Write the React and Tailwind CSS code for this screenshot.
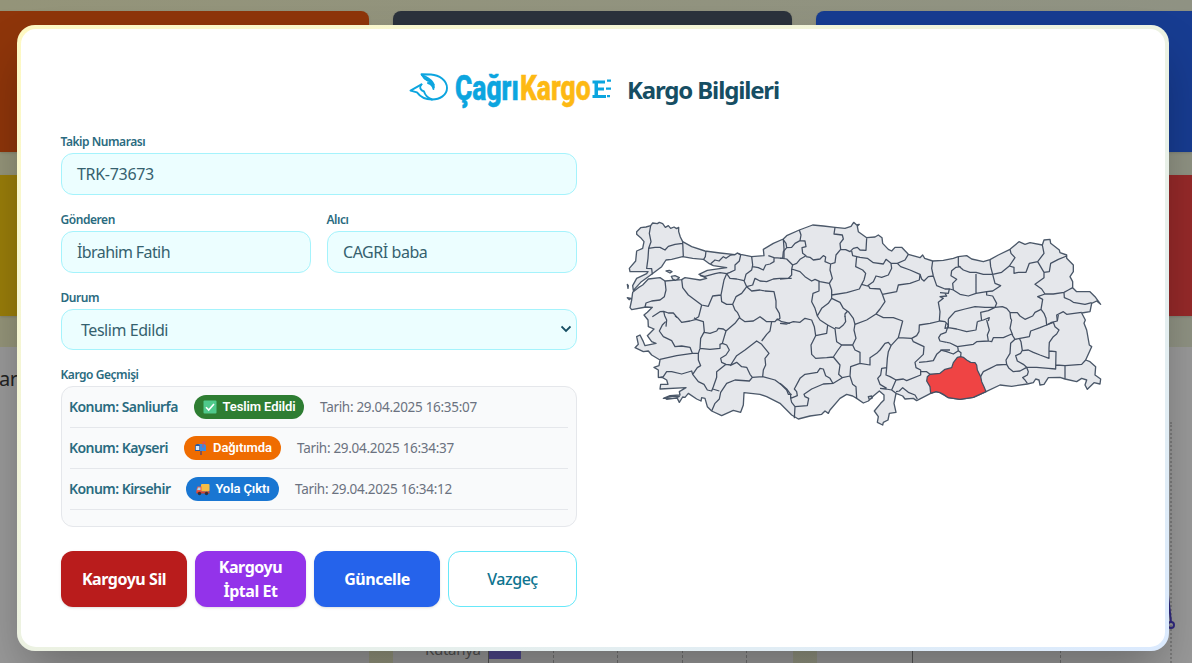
import React from "react";

const OUTLINE =
  "M50 58L50 50 62 38 78 36 92 32 98 24 112 26 118 22 128 26 136 37 145 32 152 40 162 36 170 41 176 37 176 50 181 66 188 80 215 95 255 108 300 114 345 119 352 114 362 118 395 125 432 122 430 103 460 85 490 72 500 62 538 45 578 30 610 33 645 37 675 40 693 34 701 22 710 30 718 28 712 34 715 50 740 68 765 66 775 60 786 68 788 85 805 103 815 108 825 97 845 97 865 118 900 128 908 120 914 130 938 138 970 136 1000 130 1015 125 1040 122 1055 132 1090 140 1110 134 1135 120 1170 103 1197 80 1215 88 1230 83 1267 90 1272 75 1290 73 1292 85 1318 105 1320 113 1340 120 1340 130 1360 150 1360 170 1350 185 1358 200 1358 218 1370 230 1410 230 1425 245 1442 268 1430 258 1415 265 1410 290 1385 294 1396 315 1392 325 1400 345 1408 390 1415 395 1397 435 1410 440 1427 455 1425 480 1442 492 1440 507 1422 503 1402 523 1395 510 1400 495 1385 490 1370 500 1335 492 1320 487 1285 488 1272 508 1260 510 1257 495 1247 492 1240 503 1222 507 1175 514 1140 510 1098 530 1060 547 1020 553 985 548 960 533 948 530 932 535 890 557 880 550 855 552 848 543 828 535 822 565 828 592 808 595 804 615 790 622 788 630 772 622 775 605 763 588 782 565 792 555 792 540 778 528 760 543 745 558 730 564 710 550 698 543 680 538 660 550 630 585 625 595 615 588 605 598 570 603 535 612 515 600 480 565 440 545 420 538 372 533 370 570 362 592 340 586 305 602 275 588 262 575 255 550 245 548 243 558 230 552 205 535 195 547 188 546 178 562 172 550 130 550 150 542 180 540 178 530 198 518 120 522 122 508 144 508 140 495 128 488 115 487 115 465 102 457 117 452 120 435 95 420 85 408 70 410 45 398 55 388 50 365 60 360 70 380 75 392 108 385 95 380 82 362 102 342 85 335 84 315 72 300 82 292 97 277 78 276 35 284 30 278 35 255 38 232 55 218 68 210 85 192 120 188 135 198 185 194 195 188 240 195 260 190 237 178 262 166 320 158 280 152 268 146 250 133 218 130 188 125 155 133 138 135 125 155 95 178 62 202 40 226 38 212 50 190 80 176 84 170 30 170 28 160 47 138 50 108 68 100 72 80 62 68Z";

const ISLANDS =
  "M138 168L148 166 156 170 150 174ZM154 184L165 182 178 188 168 196 158 192ZM22 208L25 212 24 220ZM22 248L33 250 28 254ZM134 548L160 543 178 544 168 549 140 553ZM745 545L755 543 757 549 748 554Z";

const BORDERS = [
  {
    shift: "translate(0 0)",
    d: "M92 32L88 55 93 80 86 100 84 130 80 160 95 161 97 178M86 100L105 97 120 97 135 105 145 94 165 88 188 85M188 80L190 125M258 108L256 125 250 135M272 146L285 135 297 138 310 125 318 130 332 120 345 119M352 114L362 120 358 138 345 150 345 165 330 172 320 176 300 173 285 176 255 184 240 182M320 176L330 190 350 192 372 197 380 215M320 176L312 195 308 215 303 240 278 243 270 262 265 274 245 270 225 255 205 240 188 218 185 193M303 240L305 260 320 268 338 268M245 270L240 290 236 305 225 312M135 198L138 225 133 245 120 255 95 258 78 264 75 276M338 268L348 245 365 235 375 222 380 215M338 268L345 285 352 292 360 308M472 316L480 310 478 295 468 278 468 258 462 230 435 228 420 225 395 228 380 215M395 125L398 150 395 165 378 178 373 197M398 155L415 158 430 165 437 150 450 147 462 140 462 128 445 122M490 72L492 100 492 130M462 128L490 130M380 215L398 210 405 190 420 198 440 200 460 192 480 190 515 190M97 305L120 290 131 289 134 302 140 315 138 335M131 289L145 294 160 294 172 308",
  },
  {
    shift: "translate(0 300)",
    d: "M137 20L127 30 118 48 130 65 155 77 165 95 185 93 210 97 217 115M165 3L175 10 185 22 210 18 228 13 250 20 253 50 242 70 240 100M253 52L270 55 290 48 295 40 310 42 318 48 312 68 307 85 300 88 300 100 270 103 240 100 235 115 217 115 170 122 120 133M318 48L345 25 358 8 375 20 400 18 420 5 440 20 465 20 472 12 485 20 510 25M455 20L450 48 440 58 425 78M307 85L320 90 328 105 318 120 302 130 305 142 318 148 332 150 350 122 375 105 410 78 425 88 447 115 435 130 437 150 430 165 428 185M235 115L235 135 242 152 232 158 218 178 215 168 185 177 155 170 140 170 130 185 115 188M218 178L235 200 252 208 262 225 275 228 280 215 290 187 290 170 318 148M330 152L350 142 365 155 380 157 390 178 397 187 388 198 345 195 320 205 302 232 298 252 285 265 275 288M278 222L298 228M397 187L428 185 465 195 485 210 500 225 505 238 515 238M228 13L222 8",
  },
  {
    shift: "translate(480 0)",
    d: "M8 72L18 85 20 98 35 97 45 85 60 77 63 60 58 45M20 98L10 110 8 130 0 130M8 130L20 132 38 150 35 162M60 77L75 78 78 95 66 98 68 115 78 122 60 133 50 145 38 150M78 125L90 127 100 135 120 132 130 122 137 126 135 140 152 147 165 143 168 120 182 103 180 85 190 72 187 60 162 57 165 37M182 103L197 104 210 110 220 100 232 97 240 105 258 106 260 70M215 108L218 122 240 127 262 130 280 143 310 147 318 133 333 145 335 160 325 180 305 187 288 183 280 200 262 213 245 208M230 125L227 155 248 165 257 175 252 195 245 208 238 222 200 233 155 240M35 162L60 170 75 185 95 198 105 193 120 200 148 205 157 190 150 165 152 147M35 162L35 180 25 190 0 192M117 200L117 228 99 235 95 260 105 280 112 303M148 205L155 225 155 250 145 265 125 280 112 303M333 145L352 145 375 135 385 118M352 145L362 155 390 165 420 178 418 195 390 205 355 210 350 230 307 238M420 178L425 192 432 198 445 185 460 183M458 138L455 160 460 183 470 212 495 222 510 222M265 212L270 220 300 222 307 238 315 260 300 282 288 297M155 250L180 262 190 280 205 290 220 310 225 328M203 288L195 297 195 305M288 297L260 315 225 328M495 235L500 243 480 245 490 250 475 262 480 290 478 318",
  },
  {
    shift: "translate(480 300)",
    d: "M0 25L20 27 40 20 60 22 75 10 95 15 103 35 107 62 140 55 143 30 120 15 112 3M143 30L165 42M107 62L93 90 95 118 107 130 140 128 160 126 172 108 185 90 170 80 167 58 165 40M195 3L197 20 190 30 178 40 165 38M185 90L218 90 228 70 222 45 225 27M218 90L225 105 240 112 240 145 212 155 210 183 218 208 228 215 230 250M160 126L180 150 176 178 187 188 210 183M240 145L270 150 270 128 290 115 300 105 315 85 325 82 333 92 325 110 322 130 320 158 305 160 302 180 293 190 300 208 320 220M288 -3L310 8 340 8 368 18 355 68 333 92M355 68L395 70 400 80 432 95 430 118 405 142 408 158 422 165 422 180 380 197 370 192 348 195 335 225 318 222 300 220M320 158L318 180 330 185 348 195M335 225L348 235M348 230L358 228 368 218 385 232 405 240 412 252M395 70L410 62 417 50 418 30 450 25 480 18 495 20 505 30 498 52 482 58 476 68 480 78 500 82M417 142L440 140 460 137 470 118 485 105 510 105M422 170L440 170 450 178 470 178M187 188L160 205 130 207 95 222 72 238 75 245 86 250 82 272 45 275 35 262 32 250 52 242 50 230 43 222 60 190 75 178 112 172 120 160 130 162 137 182 150 190 158 204M45 275L43 310M0 205L20 222 32 238 32 250",
  },
  {
    shift: "translate(960 0)",
    d: "M55 125L55 152 70 165 90 172 108 172 130 178 158 178 152 155 150 134M158 178L185 172 208 153 225 128 213 115 210 103M62 155L48 157 35 167 33 182 50 193 38 205 40 225 60 238 85 243 108 235 108 177M108 235L140 230 158 228 182 212 165 205 158 178M208 153L222 157 222 175 235 172 258 172 268 145 293 140 312 115 307 90M293 140L312 172 328 170 332 145 355 133 380 123M312 172L312 188 285 208 305 222 315 237 340 237 372 232 385 225 398 218M315 237L293 245 308 253 303 283 285 292 278 303 255 313 240 303 232 293 210 292 200 280 187 275 165 277 170 265 158 243 140 240 140 230M372 232L373 248 390 255 400 262 435 268 455 263M303 283L312 295 318 310 320 330 335 322 352 318 350 300 370 290 380 298 425 292M30 222L40 225M0 233L25 235 28 222M25 312L45 290 75 282 105 275 135 277 165 277M165 277L145 287 122 292 125 318M112 320L130 315 148 308 145 318M210 292L212 310 215 315",
  },
  {
    shift: "translate(960 300)",
    d: "M25 12L25 38 50 42 80 50 108 45 112 20M25 38L15 40 18 25M20 82L30 84 52 95 100 88 110 80 145 78 142 60 148 45 140 15M145 78L155 80 160 68 190 68 215 57 225 73 240 70 268 65 272 48 300 38 320 30M215 15L210 40 218 60M320 30L340 22 345 35 357 45 350 57 340 65 328 82 327 100 327 130 300 120 280 112 265 105 247 107 243 80 238 70M352 18L355 0M225 73L212 85 210 115 198 135 200 148 170 150 150 160 130 170 120 188M246 107L242 115 227 122 232 138 250 148 260 157 290 157 325 160 347 162 348 110 328 108M200 148L207 160 220 170 240 168 260 157 265 170 262 180 248 188 255 195 262 205M348 150L375 152 425 148 437 135M375 152L375 192M0 105L20 110 40 117 55 107 53 95M55 107L63 113 62 125",
  },
];

const SANLIURFA =
  "M1022 425L1030 427 1040 435 1052 442 1065 443 1070 450 1072 465 1082 485 1085 500 1092 515 1098 530 1060 547 1020 553 985 548 970 538 960 533 948 530 932 535 930 515 920 498 922 485 930 478 960 475 975 463 995 458 1000 443 1012 427Z";

function TurkeyMap() {
  return (
    <svg viewBox="0 0 1470 660" className="h-[220px] w-[490px] shrink-0" strokeLinejoin="round">
      <path d={OUTLINE + ISLANDS} fill="#e5e7eb" stroke="#4b5869" strokeWidth="4" />
      {BORDERS.map((group) => (
        <path key={group.shift} d={group.d} transform={group.shift} fill="none" stroke="#445063" strokeWidth="3.8" />
      ))}
      <path d={SANLIURFA} fill="#ef4444" stroke="#445063" strokeWidth="3.8" />
    </svg>
  );
}

function Logo() {
  return (
    <svg viewBox="0 0 204 48" className="h-12 w-[204px]">
      <g fill="none" stroke="#0ca5df" strokeWidth="1.9" strokeLinejoin="round" strokeLinecap="round" transform="translate(1 0)">
        <path d="M12.5 19.4L1.500 25.600 8 27.400C11 31.500 16 34.500 23 34.500" />
        <path d="M12.500 19.400C10 22 11 25 15 26.500 16 30 18 32.500 23 34.500 31 34.500 38 30 38 23 38 15 30 10 22 9.500L12.500 9.200C14 12 16 14 18.500 15.500" />
        <path d="M13 10C18 13 22 13 25 20M16.500 14C20 16 23 17 25 22M19 18C22 19 24 21 24.500 24" />
      </g>
      <g fontFamily="Roboto, 'Liberation Sans', sans-serif" fontWeight="800" fontSize="35.500">
        <text transform="translate(47 35) scale(0.745 1)" fill="#0ca5df" stroke="#0ca5df" strokeWidth="0.6">Çağrı</text>
        <text transform="translate(112 35) scale(0.745 1)" fill="#fdb913" stroke="#fdb913" strokeWidth="0.6">Kargo</text>
      </g>
      <path d="M184.500 15.500h12.500v3h-7v4h6v3h-6v4.500h8v3h-13.500v-3h2v-11.500h-2zM199 14.500h4v2.300h-4zM198 22.500h5v2.300h-5zM199 30h3v2.300h-3z" fill="#0ca5df" />
    </svg>
  );
}

function CheckIcon() {
  return (
    <svg viewBox="0 0 14 14" className="size-3.5">
      <rect x="0.500" y="0.500" width="13" height="13" rx="1" fill="#4fc98b" />
      <path d="M3 7.200L5.700 10 11 4" fill="none" stroke="#fff" strokeWidth="1.600" />
    </svg>
  );
}

function MailboxIcon() {
  return (
    <svg viewBox="0 0 14 14" className="size-3.5">
      <path d="M6 9h2v5H6z" fill="#8b5148" />
      <path d="M3.500 3H9.500a2.500 2.500 0 0 1 2.500 2.500V10h-8.500z" fill="#3d8be0" />
      <path d="M1 10V5.500a2.500 2.500 0 0 1 5 0V10z" fill="#28579f" />
      <path d="M1.800 5h3.500v4H1.800z" fill="#dce9f8" />
      <path d="M8.500 .500h3v2h-2v4h-1z" fill="#e34f50" />
    </svg>
  );
}

function TruckIcon() {
  return (
    <svg viewBox="0 0 14 14" className="size-3.5">
      <rect x="5" y="2" width="8.500" height="7.500" rx="1" fill="#f6bd45" />
      <path d="M1.500 4.500h4V11H.5V7.500z" fill="#ef5a43" />
      <path d="M2 5.500h2.500V8H1.200z" fill="#a8d9f5" />
      <path d="M.5 9.500h13v2H.5z" fill="#d9402f" />
      <circle cx="3.500" cy="11.500" r="1.700" fill="#33313b" />
      <circle cx="10.500" cy="11.500" r="1.700" fill="#33313b" />
    </svg>
  );
}

const HISTORY = [
  { place: "Sanliurfa", status: "Teslim Edildi", Icon: CheckIcon, time: "29.04.2025 16:35:07", badge: "w-[110px] bg-[#2e7d32]", label: "w-[109px]" },
  { place: "Kayseri", status: "Dağıtımda", Icon: MailboxIcon, time: "29.04.2025 16:34:37", badge: "w-[97px] bg-[#ef6c00]", label: "w-[99px]" },
  { place: "Kirsehir", status: "Yola Çıktı", Icon: TruckIcon, time: "29.04.2025 16:34:12", badge: "w-[93px] bg-[#1976d2]", label: "w-[101px]" },
];

function Label({ children }) {
  return <div className="-ml-[0.5px] h-5 whitespace-nowrap text-xs leading-[18px] font-semibold tracking-[-0.450px] text-[#2a6b80]">{children}</div>;
}

function Field({ label, value, tracking }) {
  return (
    <div className="min-w-0 flex-1">
      <Label>{label}</Label>
      <div className={`${tracking} flex h-[42px] items-center rounded-xl border border-[#a5f3fc] bg-[#ecfeff] px-[15px] text-base text-[#35616e]`}>
        {value}
      </div>
    </div>
  );
}

function Backdrop() {
  return (
    <div className="absolute inset-0 flex flex-col bg-linear-to-r from-[#949479] to-[#8f9283] pt-[11px]">
      <div className="flex h-[141px] shrink-0 gap-6">
        <div className="w-[369px] rounded-r-lg bg-[#8e350a] shadow" />
        <div className="w-[399px] rounded-lg bg-[#2b323c] shadow" />
        <div className="w-[376px] rounded-l-lg bg-[#173c91] shadow" />
      </div>
      <div className="mt-[23px] flex h-[141px] shrink-0 gap-6">
        <div className="w-[369px] rounded-r-lg bg-[#997d0a] shadow" />
        <div className="w-[399px] rounded-lg bg-[#2b323c]" />
        <div className="w-[376px] rounded-l-lg bg-[#952929] shadow" />
      </div>
      <div className="mt-[31px] flex min-h-0 flex-1 gap-6">
        <div className="w-[369px] bg-[#999] pt-[18px] text-xl tracking-[-0.5px] text-[#222]">
          <span className="-ml-px">ar</span>
        </div>
        <div className="relative w-[400px] overflow-hidden bg-[#999]">
          <span className="absolute top-[292px] left-[32px] text-[15px] leading-5 tracking-[-0.3px] text-[#505050]">Kütahya</span>
          <span className="absolute top-0 left-[95px] h-full w-px bg-[#555]" />
          <span className="absolute top-[300px] left-[96px] h-[12px] w-8 bg-[#4e478b]" />
          <span className="absolute top-0 left-[160px] h-full border-l border-dashed border-[#707070]" />
          <span className="absolute top-0 left-[224px] h-full border-l border-dashed border-[#707070]" />
          <span className="absolute top-0 left-[289px] h-full border-l border-dashed border-[#707070]" />
          <span className="absolute top-0 left-[353px] h-full border-l border-dashed border-[#707070]" />
        </div>
        <div className="relative w-[375px] bg-[#999]">
          <span className="absolute top-0 left-[95px] h-full w-px bg-[#555]" />
          <span className="absolute top-0 left-[243px] h-full border-l border-dashed border-[#707070]" />
          <span className="absolute top-[75px] left-[353px] h-full border-l-2 border-dotted border-[#7b7b7b]" />
          <svg viewBox="0 0 14 40" className="absolute top-[244px] left-[346px] h-10 w-3.5" fill="none" stroke="#30287f" strokeWidth="2">
            <path d="M5 4L8 31" />
            <circle cx="8" cy="34" r="3" />
          </svg>
        </div>
      </div>
    </div>
  );
}

export default function App() {
  return (
    <div className="relative h-[663px] w-[1192px] overflow-hidden font-['Noto_Sans','Open_Sans',sans-serif]">
      <Backdrop />
      <div className="absolute top-[25px] left-[17px] h-[626px] w-[1152px] rounded-[18px] bg-linear-to-br from-[#fef9c3] to-[#dbeafe] p-1 shadow-[0_25px_50px_-8px_rgba(0,0,0,0.3)]">
        <div className="flex h-full flex-col rounded-[15px] bg-white px-10 pt-9">
          <div className="flex h-12 items-center justify-center gap-[15px] pl-[3px]">
            <Logo />
            <h2 className="w-[154px] pt-px text-2xl font-bold tracking-[-1.150px] whitespace-nowrap text-[#164e63]">Kargo Bilgileri</h2>
          </div>
          <div className="mt-5 flex">
            <div className="w-[516px] shrink-0">
              <div className="flex">
                <Field label="Takip Numarası" value="TRK-73673" tracking="tracking-[-0.3px]" />
              </div>
              <div className="mt-4 flex gap-4">
                <Field label="Gönderen" value="İbrahim Fatih" tracking="tracking-[-0.6px]" />
                <Field label="Alıcı" value="CAGRİ baba" tracking="tracking-[-0.450px]" />
              </div>
              <div className="mt-4">
                <Label>Durum</Label>
                <div className="flex h-[41px] items-center justify-between rounded-xl border border-[#a5f3fc] bg-[#ecfeff] pt-px pr-[5px] pl-[19px] text-base tracking-[-0.450px] text-[#35616e]">
                  Teslim Edildi
                  <svg viewBox="0 0 10 8" className="-mt-0.5 h-2 w-2.5" fill="none" stroke="#164e63" strokeWidth="1.800">
                    <path d="M.5 1.500L5 6l4.500-4.500" />
                  </svg>
                </div>
              </div>
              <div className="mt-4">
                <Label>Kargo Geçmişi</Label>
                <div className="h-[141px] rounded-xl border border-[#e5e7eb] bg-[#f9fafb] px-2">
                  {HISTORY.map(({ place, status, Icon, time, badge, label }) => (
                    <div key={place} className="flex h-[41px] items-center border-b border-[#e5e7eb] text-sm whitespace-nowrap">
                      <span className={`${label} -ml-px font-semibold tracking-[-0.550px] text-[#2a6b80]`}>Konum: {place}</span>
                      <span className={`${badge} ml-4 flex h-6 items-center justify-center gap-[5px] rounded-full pl-px font-[Roboto,'Liberation_Sans',sans-serif] text-[13px] font-semibold tracking-[-0.1px] text-white`}>
                        <Icon />
                        {status}
                      </span>
                      <span className="ml-4 pt-0.5 text-[13.500px] tracking-[-0.3px] text-[#6b7280]">Tarih: {time}</span>
                    </div>
                  ))}
                </div>
              </div>
              <div className="mt-6 flex h-14 gap-2 text-center text-base leading-6 font-bold tracking-[-0.450px] text-white">
                <button className="w-[126px] rounded-xl bg-[#b91c1c] shadow">Kargoyu Sil</button>
                <button className="w-[111px] rounded-xl bg-[#9333ea] px-4 shadow">Kargoyu İptal Et</button>
                <button className="w-[126px] rounded-xl bg-[#2563eb] shadow">Güncelle</button>
                <button className="w-[129px] rounded-xl border border-[#67e8f9] bg-white font-medium text-[#0e7490]">Vazgeç</button>
              </div>
            </div>
            <div className="flex flex-1 justify-start pt-[82px] pl-[43px]">
              <TurkeyMap />
            </div>
          </div>
        </div>
      </div>
    </div>
  );
}
